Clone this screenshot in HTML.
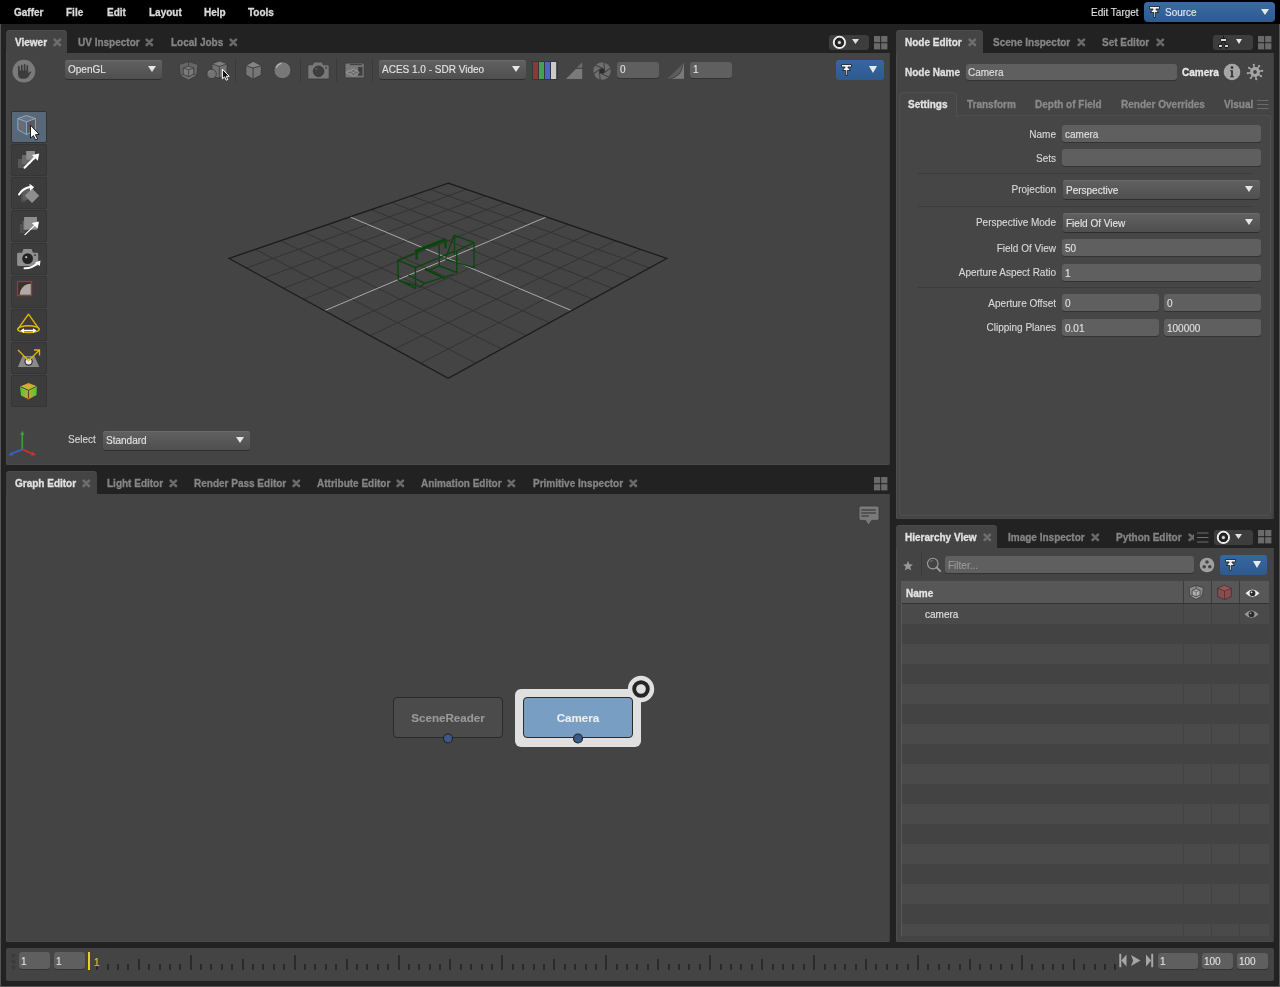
<!DOCTYPE html>
<html><head><meta charset="utf-8">
<style>
*{box-sizing:border-box;margin:0;padding:0}
html,body{width:1280px;height:987px;overflow:hidden;background:#222;font-family:"Liberation Sans",sans-serif;font-size:10px;color:#ddd}
.a{position:absolute}
svg.a{overflow:visible}
.t{position:absolute;white-space:nowrap;line-height:12px;font-size:10px;will-change:transform;-webkit-text-stroke:0.12px}
</style></head><body>

<div class="a" style="left:0px;top:24px;width:1px;height:963px;background:#555"></div>
<div class="a" style="left:1279px;top:24px;width:1px;height:963px;background:#555"></div>
<div class="a" style="left:0px;top:986px;width:1280px;height:1px;background:#555"></div>
<div class="a" style="left:0px;top:0px;width:1280px;height:24px;background:#000"></div>
<div class="t" style="left:14px;top:7px;color:#dadada;font-weight:bold;-webkit-text-stroke:0.3px;">Gaffer</div>
<div class="t" style="left:66px;top:7px;color:#dadada;font-weight:bold;-webkit-text-stroke:0.3px;">File</div>
<div class="t" style="left:107px;top:7px;color:#dadada;font-weight:bold;-webkit-text-stroke:0.3px;">Edit</div>
<div class="t" style="left:149px;top:7px;color:#dadada;font-weight:bold;-webkit-text-stroke:0.3px;">Layout</div>
<div class="t" style="left:204px;top:7px;color:#dadada;font-weight:bold;-webkit-text-stroke:0.3px;">Help</div>
<div class="t" style="left:248px;top:7px;color:#dadada;font-weight:bold;-webkit-text-stroke:0.3px;">Tools</div>
<div class="t" style="left:1091px;top:7px;color:#e0e0e0;">Edit Target</div>
<div class="a" style="left:1144px;top:2px;width:131px;height:20px;background:linear-gradient(#3a6ba6,#2d5a90);border-radius:4px;"></div>
<svg class="a" style="left:1149px;top:6px" width="12" height="12" viewBox="0 0 12 12"><path d="M0.5 0.5H10.5V3H6.8L9.5 6.5H6.3V11.5H4.7V6.5H1.5L4.2 3H0.5Z" fill="#f2f2f2" stroke="#161616" stroke-width="0.8" stroke-linejoin="round"/></svg>
<div class="t" style="left:1165px;top:7px;color:#e8e8e8;">Source</div>
<svg class="a" style="left:1261px;top:9px" width="8" height="6" viewBox="0 0 8 6"><path d="M0 0H8L4.0 6Z" fill="#e6e6e6"/></svg>
<div class="a" style="left:6px;top:53px;width:884px;height:412px;background:#444;border-radius:0 0 2px 2px;box-shadow:inset 1px 0 0 #4d4d4d, inset -1px 0 0 #3d3d3d, inset 0 -1px 0 #4a4a4a;"></div>
<div class="a" style="left:6px;top:30px;width:61px;height:24px;background:#444;border-radius:4px 4px 0 0;box-shadow:inset 0 1px 0 #4b4b4b"></div>
<div class="t" style="left:15px;top:37px;color:#e2e2e2;font-weight:bold;-webkit-text-stroke:0.3px;">Viewer</div>
<svg class="a" style="left:53px;top:38px" width="9" height="9" viewBox="0 0 9 9"><path d="M1.6 1.6L7 7M7 1.6L1.6 7" stroke="#6e6e6e" stroke-width="2.6" stroke-linecap="round"/></svg>
<div class="t" style="left:78px;top:37px;color:#858585;font-weight:bold;-webkit-text-stroke:0.3px;">UV Inspector</div>
<svg class="a" style="left:145px;top:38px" width="9" height="9" viewBox="0 0 9 9"><path d="M1.6 1.6L7 7M7 1.6L1.6 7" stroke="#6a6a6a" stroke-width="2.6" stroke-linecap="round"/></svg>
<div class="t" style="left:171px;top:37px;color:#858585;font-weight:bold;-webkit-text-stroke:0.3px;">Local Jobs</div>
<svg class="a" style="left:229px;top:38px" width="9" height="9" viewBox="0 0 9 9"><path d="M1.6 1.6L7 7M7 1.6L1.6 7" stroke="#6a6a6a" stroke-width="2.6" stroke-linecap="round"/></svg>
<div class="a" style="left:829px;top:35px;width:40px;height:15px;background:#3d3d3d;border-radius:3px"></div>
<svg class="a" style="left:832px;top:35px" width="14" height="14"><circle cx="7.4" cy="7.4" r="5.6" fill="none" stroke="#eee" stroke-width="2"/><circle cx="7.4" cy="7.4" r="3.5" fill="none" stroke="#1e1e1e" stroke-width="2.2"/><circle cx="7.4" cy="7.4" r="1.5" fill="#ddd"/></svg>
<svg class="a" style="left:852px;top:39px" width="7" height="5" viewBox="0 0 7 5"><path d="M0 0H7L3.5 5Z" fill="#e0e0e0"/></svg>
<svg class="a" style="left:874px;top:36px" width="14" height="14"><rect x="0" y="0" width="6.2" height="6.2" fill="#6a6a6a"/><rect x="7.2" y="0" width="6.2" height="6.2" fill="#6a6a6a"/><rect x="0" y="7.2" width="6.2" height="6.2" fill="#6a6a6a"/><rect x="7.2" y="7.2" width="6.2" height="6.2" fill="#6a6a6a"/></svg>
<div class="a" style="left:896px;top:53px;width:378px;height:466px;background:#444;border-radius:0 0 2px 2px;box-shadow:inset 1px 0 0 #4d4d4d, inset -1px 0 0 #3d3d3d, inset 0 -1px 0 #4a4a4a;"></div>
<div class="a" style="left:896px;top:30px;width:87px;height:24px;background:#444;border-radius:4px 4px 0 0;box-shadow:inset 0 1px 0 #4b4b4b"></div>
<div class="t" style="left:905px;top:37px;color:#e2e2e2;font-weight:bold;-webkit-text-stroke:0.3px;">Node Editor</div>
<svg class="a" style="left:968px;top:38px" width="9" height="9" viewBox="0 0 9 9"><path d="M1.6 1.6L7 7M7 1.6L1.6 7" stroke="#6e6e6e" stroke-width="2.6" stroke-linecap="round"/></svg>
<div class="t" style="left:993px;top:37px;color:#858585;font-weight:bold;-webkit-text-stroke:0.3px;">Scene Inspector</div>
<svg class="a" style="left:1077px;top:38px" width="9" height="9" viewBox="0 0 9 9"><path d="M1.6 1.6L7 7M7 1.6L1.6 7" stroke="#6a6a6a" stroke-width="2.6" stroke-linecap="round"/></svg>
<div class="t" style="left:1102px;top:37px;color:#858585;font-weight:bold;-webkit-text-stroke:0.3px;">Set Editor</div>
<svg class="a" style="left:1156px;top:38px" width="9" height="9" viewBox="0 0 9 9"><path d="M1.6 1.6L7 7M7 1.6L1.6 7" stroke="#6a6a6a" stroke-width="2.6" stroke-linecap="round"/></svg>
<div class="a" style="left:1213px;top:35px;width:40px;height:15px;background:#3d3d3d;border-radius:3px"></div>
<svg class="a" style="left:1217px;top:35px" width="14" height="14" viewBox="0 0 14 14"><path d="M6.5 0.5V3.6M6.5 6.4L3.5 9.4M6.5 6.4L9.5 9.4M3.5 12.5V13.8M9.5 12.5V13.8" stroke="#111" stroke-width="0.9"/><rect x="3.4" y="3.6" width="6.1" height="2.8" rx="0.6" fill="#f0f0f0" stroke="#111" stroke-width="1"/><rect x="1.5" y="9.4" width="3.9" height="3.1" rx="0.6" fill="#d8d8d8" stroke="#111" stroke-width="1"/><rect x="7.6" y="9.4" width="3.9" height="3.1" rx="0.6" fill="#d8d8d8" stroke="#111" stroke-width="1"/></svg>
<svg class="a" style="left:1236px;top:39px" width="6" height="5" viewBox="0 0 6 5"><path d="M0 0H6L3.0 5Z" fill="#e8e8e8"/></svg>
<svg class="a" style="left:1258px;top:36px" width="14" height="14"><rect x="0" y="0" width="6.2" height="6.2" fill="#6a6a6a"/><rect x="7.2" y="0" width="6.2" height="6.2" fill="#6a6a6a"/><rect x="0" y="7.2" width="6.2" height="6.2" fill="#6a6a6a"/><rect x="7.2" y="7.2" width="6.2" height="6.2" fill="#6a6a6a"/></svg>
<div class="a" style="left:6px;top:494px;width:884px;height:448px;background:#444;border-radius:0 0 2px 2px;box-shadow:inset 1px 0 0 #4d4d4d, inset -1px 0 0 #3d3d3d, inset 0 -1px 0 #4a4a4a;"></div>
<div class="a" style="left:6px;top:471px;width:91px;height:24px;background:#444;border-radius:4px 4px 0 0;box-shadow:inset 0 1px 0 #4b4b4b"></div>
<div class="t" style="left:15px;top:478px;color:#e2e2e2;font-weight:bold;-webkit-text-stroke:0.3px;">Graph Editor</div>
<svg class="a" style="left:82px;top:479px" width="9" height="9" viewBox="0 0 9 9"><path d="M1.6 1.6L7 7M7 1.6L1.6 7" stroke="#6e6e6e" stroke-width="2.6" stroke-linecap="round"/></svg>
<div class="t" style="left:107px;top:478px;color:#858585;font-weight:bold;-webkit-text-stroke:0.3px;">Light Editor</div>
<svg class="a" style="left:169px;top:479px" width="9" height="9" viewBox="0 0 9 9"><path d="M1.6 1.6L7 7M7 1.6L1.6 7" stroke="#6a6a6a" stroke-width="2.6" stroke-linecap="round"/></svg>
<div class="t" style="left:194px;top:478px;color:#858585;font-weight:bold;-webkit-text-stroke:0.3px;">Render Pass Editor</div>
<svg class="a" style="left:292px;top:479px" width="9" height="9" viewBox="0 0 9 9"><path d="M1.6 1.6L7 7M7 1.6L1.6 7" stroke="#6a6a6a" stroke-width="2.6" stroke-linecap="round"/></svg>
<div class="t" style="left:317px;top:478px;color:#858585;font-weight:bold;-webkit-text-stroke:0.3px;">Attribute Editor</div>
<svg class="a" style="left:396px;top:479px" width="9" height="9" viewBox="0 0 9 9"><path d="M1.6 1.6L7 7M7 1.6L1.6 7" stroke="#6a6a6a" stroke-width="2.6" stroke-linecap="round"/></svg>
<div class="t" style="left:421px;top:478px;color:#858585;font-weight:bold;-webkit-text-stroke:0.3px;">Animation Editor</div>
<svg class="a" style="left:507px;top:479px" width="9" height="9" viewBox="0 0 9 9"><path d="M1.6 1.6L7 7M7 1.6L1.6 7" stroke="#6a6a6a" stroke-width="2.6" stroke-linecap="round"/></svg>
<div class="t" style="left:533px;top:478px;color:#858585;font-weight:bold;-webkit-text-stroke:0.3px;">Primitive Inspector</div>
<svg class="a" style="left:629px;top:479px" width="9" height="9" viewBox="0 0 9 9"><path d="M1.6 1.6L7 7M7 1.6L1.6 7" stroke="#6a6a6a" stroke-width="2.6" stroke-linecap="round"/></svg>
<svg class="a" style="left:874px;top:477px" width="14" height="14"><rect x="0" y="0" width="6.2" height="6.2" fill="#6a6a6a"/><rect x="7.2" y="0" width="6.2" height="6.2" fill="#6a6a6a"/><rect x="0" y="7.2" width="6.2" height="6.2" fill="#6a6a6a"/><rect x="7.2" y="7.2" width="6.2" height="6.2" fill="#6a6a6a"/></svg>
<div class="a" style="left:896px;top:548px;width:378px;height:394px;background:#444;border-radius:0 0 2px 2px;box-shadow:inset 1px 0 0 #4d4d4d, inset -1px 0 0 #3d3d3d, inset 0 -1px 0 #4a4a4a;"></div>
<div class="a" style="left:896px;top:525px;width:101px;height:24px;background:#444;border-radius:4px 4px 0 0;box-shadow:inset 0 1px 0 #4b4b4b"></div>
<div class="t" style="left:905px;top:532px;color:#e2e2e2;font-weight:bold;-webkit-text-stroke:0.3px;">Hierarchy View</div>
<svg class="a" style="left:983px;top:533px" width="9" height="9" viewBox="0 0 9 9"><path d="M1.6 1.6L7 7M7 1.6L1.6 7" stroke="#6e6e6e" stroke-width="2.6" stroke-linecap="round"/></svg>
<div class="t" style="left:1008px;top:532px;color:#858585;font-weight:bold;-webkit-text-stroke:0.3px;">Image Inspector</div>
<svg class="a" style="left:1091px;top:533px" width="9" height="9" viewBox="0 0 9 9"><path d="M1.6 1.6L7 7M7 1.6L1.6 7" stroke="#6a6a6a" stroke-width="2.6" stroke-linecap="round"/></svg>
<div class="t" style="left:1116px;top:532px;color:#858585;font-weight:bold;-webkit-text-stroke:0.3px;">Python Editor</div>
<svg class="a" style="left:1188px;top:533px" width="9" height="9" viewBox="0 0 9 9"><path d="M1.6 1.6L7 7M7 1.6L1.6 7" stroke="#6a6a6a" stroke-width="2.6" stroke-linecap="round"/></svg>
<div class="a" style="left:1194px;top:525px;width:3px;height:23px;background:#222"></div>
<svg class="a" style="left:1197px;top:532px" width="12" height="11"><path d="M0 1H11.5M0 5.5H11.5M0 10H11.5" stroke="#6e6e6e" stroke-width="1.2"/></svg>
<div class="a" style="left:1214px;top:530px;width:39px;height:15px;background:#3d3d3d;border-radius:3px"></div>
<svg class="a" style="left:1216px;top:530px" width="14" height="14"><circle cx="7.4" cy="7.4" r="5.6" fill="none" stroke="#eee" stroke-width="2"/><circle cx="7.4" cy="7.4" r="3.5" fill="none" stroke="#1e1e1e" stroke-width="2.2"/><circle cx="7.4" cy="7.4" r="1.5" fill="#ddd"/></svg>
<svg class="a" style="left:1235px;top:534px" width="7" height="5" viewBox="0 0 7 5"><path d="M0 0H7L3.5 5Z" fill="#e0e0e0"/></svg>
<svg class="a" style="left:1258px;top:530px" width="14" height="14"><rect x="0" y="0" width="6.2" height="6.2" fill="#6a6a6a"/><rect x="7.2" y="0" width="6.2" height="6.2" fill="#6a6a6a"/><rect x="0" y="7.2" width="6.2" height="6.2" fill="#6a6a6a"/><rect x="7.2" y="7.2" width="6.2" height="6.2" fill="#6a6a6a"/></svg>
<div class="a" style="left:6px;top:948px;width:1268px;height:33px;background:#444;border-radius:2px;"></div>
<svg class="a" style="left:12px;top:60px" width="24" height="24" viewBox="0 0 24 24"><circle cx="11.9" cy="11.2" r="11.35" fill="#7a7a7a"/><path d="M6.9 6.6V12M9.8 5.6V11M12.6 4.8V11M15.3 5.8V12" stroke="#3c3c3c" stroke-width="1.7" stroke-linecap="round"/><path d="M6.1 10.5H16.2V13.5L18.3 11.2L19.3 12L16.5 16.5Q15.2 18.8 12.4 18.8H10.4Q6.1 18.8 6.1 14.5Z" fill="#3c3c3c"/></svg>
<div class="a" style="left:65px;top:60px;width:97px;height:19px;background:linear-gradient(#616161,#4f4f4f);border-radius:3px;box-shadow:0 1px 0 #2e2e2e, inset 0 1px 0 #6a6a6a;"></div>
<div class="t" style="left:68px;top:64px;color:#e4e4e4;">OpenGL</div>
<svg class="a" style="left:148px;top:66px" width="8" height="6" viewBox="0 0 8 6"><path d="M0 0H8L4.0 6Z" fill="#e6e6e6"/></svg>
<svg class="a" style="left:179px;top:61px" width="20" height="20" viewBox="0 0 20 20"><path d="M0.2 3.6L9.6 0.5L19 3.6L18 14.3L9.6 19L1.2 14.8Z" fill="#666" stroke="#393939" stroke-width="0.8"/><path d="M1.2 14.8L9.6 11.5L18 14.3L9.6 19Z" fill="#707070" stroke="#393939" stroke-width="0.7"/><path d="M9.6 0.5V5" stroke="#393939" stroke-width="0.8"/><path d="M9.6 5L14.75 7.1V13.2L9.6 15.75L4.2 13.4V7.1Z" fill="#7a7a7a" stroke="#393939" stroke-width="0.8"/><path d="M4.2 7.1L9.6 8.7L14.75 7.1M9.6 8.7V15.75" stroke="#393939" stroke-width="0.7" fill="none"/></svg>
<svg class="a" style="left:206px;top:61px" width="22" height="19" viewBox="0 0 22 19"><path d="M13.5 0.3L21 3.1V14.8L13.3 16.9L6 15.75V2.9Z" fill="#727272" stroke="#393939" stroke-width="0.8"/><path d="M6.2 3.2L13.3 5.4L20.8 3.2L13.5 0.6Z" fill="#7e7e7e"/><path d="M5.8 2.9L13.3 5.4L21 3.1M13.3 5.4V16.8" stroke="#393939" stroke-width="0.8" fill="none"/><circle cx="5.6" cy="12.9" r="4.7" fill="#737373" stroke="#393939" stroke-width="0.8"/><path d="M2.8 11.5a3 3 0 0 1 1.8 -2" stroke="#999" stroke-width="0.8" fill="none"/></svg>
<svg class="a" style="left:221px;top:68px" width="10" height="14"><path d="M1.4 1.2V10.8L3.6 8.9L5.2 12.2L6.8 11.5L5.3 8.3H8.2Z" fill="#111" stroke="#fff" stroke-width="1" stroke-linejoin="round"/></svg>
<div class="a" style="left:235px;top:58px;width:1px;height:24px;background:#3a3a3a"></div>
<svg class="a" style="left:245px;top:61px" width="18" height="20" viewBox="0 0 18 20"><path d="M8.1 0.5L16.3 4.8V14.1L8.1 18.2L0.8 14.1V4.8Z" fill="#767676" stroke="#393939" stroke-width="0.9"/><path d="M8.1 0.9L16 4.9L8.1 7L1.1 4.9Z" fill="#838383"/><path d="M0.8 4.8L8.1 7L16.3 4.8M8.1 7V18.2" stroke="#393939" stroke-width="0.9" fill="none"/></svg>
<svg class="a" style="left:273px;top:61px" width="19" height="19" viewBox="0 0 19 19"><circle cx="9.45" cy="9.2" r="8.5" fill="#787878" stroke="#393939" stroke-width="0.8"/><path d="M3.6 6.2Q4.8 3.2 8 2.4" stroke="#b8b8b8" stroke-width="1.3" fill="none" stroke-linecap="round"/></svg>
<div class="a" style="left:300px;top:58px;width:1px;height:24px;background:#3a3a3a"></div>
<svg class="a" style="left:307px;top:61px" width="23" height="19" viewBox="0 0 23 19"><path d="M2.3 3.8H5.5L6.8 1H15L16.3 3.8H20.7a1.5 1.5 0 0 1 1.5 1.5V16.5A1.5 1.5 0 0 1 20.7 18H2.3A1.5 1.5 0 0 1 0.8 16.5V5.3A1.5 1.5 0 0 1 2.3 3.8Z" fill="#787878" stroke="#393939" stroke-width="0.8"/><circle cx="11.55" cy="10.3" r="5.3" fill="#3e3e3e" stroke="#303030" stroke-width="0.8"/><circle cx="9.2" cy="8" r="0.8" fill="#777"/><circle cx="19.1" cy="6.7" r="1" fill="#444"/></svg>
<div class="a" style="left:336px;top:58px;width:1px;height:24px;background:#3a3a3a"></div>
<svg class="a" style="left:344px;top:62px" width="21" height="17" viewBox="0 0 21 17"><rect x="1" y="1.1" width="19.2" height="14.8" rx="1.5" fill="#787878" stroke="#393939" stroke-width="0.8"/><path d="M6 2.6H18" stroke="#3e3e3e" stroke-width="1"/><rect x="14.2" y="4.9" width="4.3" height="8.8" fill="#3e3e3e"/><path d="M2.1 10.4L9.8 7.1L15.2 10.4L9.8 14.2Z" fill="#6a6a6a" stroke="#a0a0a0" stroke-width="0.9"/><path d="M6 8.8L12.5 12.3M12.5 8.8L6 12.3" stroke="#a0a0a0" stroke-width="0.6"/></svg>
<div class="a" style="left:372px;top:58px;width:1px;height:24px;background:#3a3a3a"></div>
<div class="a" style="left:379px;top:60px;width:147px;height:19px;background:linear-gradient(#616161,#4f4f4f);border-radius:3px;box-shadow:0 1px 0 #2e2e2e, inset 0 1px 0 #6a6a6a;"></div>
<div class="t" style="left:382px;top:64px;color:#e4e4e4;">ACES 1.0 - SDR Video</div>
<svg class="a" style="left:512px;top:66px" width="8" height="6" viewBox="0 0 8 6"><path d="M0 0H8L4.0 6Z" fill="#e6e6e6"/></svg>
<svg class="a" style="left:532px;top:61px" width="26" height="19" viewBox="0 0 26 19"><rect x="0" y="0" width="26" height="19" fill="#363636" rx="1"/><rect x="1" y="1" width="5" height="17" fill="#8a3a36"/><rect x="7" y="1" width="5" height="17" fill="#45a050"/><rect x="13" y="1" width="5" height="17" fill="#5062c8"/><rect x="19" y="1" width="5.2" height="17" fill="#cacaca"/></svg>
<svg class="a" style="left:565px;top:61px" width="18" height="19" viewBox="0 0 18 19"><path d="M17.2 1.3V6.8H11.9Z" fill="#6c6c6c"/><path d="M10.8 7.9H17.2V18H0.9Z" fill="#7a7a7a"/></svg>
<svg class="a" style="left:593px;top:62px" width="18" height="18" viewBox="0 0 18 18"><circle cx="9" cy="9" r="8.7" fill="#6e6e6e"/><circle cx="9" cy="9" r="2.8" fill="#2c2c2c"/><path d="M9 9 L17.70 9.00" stroke="#3a3a3a" stroke-width="0.9" transform="rotate(25 9 9) translate(0.00 2.60)"/><path d="M9 9 L13.35 16.53" stroke="#3a3a3a" stroke-width="0.9" transform="rotate(25 9 9) translate(-2.25 1.30)"/><path d="M9 9 L4.65 16.54" stroke="#3a3a3a" stroke-width="0.9" transform="rotate(25 9 9) translate(-2.25 -1.30)"/><path d="M9 9 L0.30 9.01" stroke="#3a3a3a" stroke-width="0.9" transform="rotate(25 9 9) translate(-0.00 -2.60)"/><path d="M9 9 L4.64 1.47" stroke="#3a3a3a" stroke-width="0.9" transform="rotate(25 9 9) translate(2.25 -1.30)"/><path d="M9 9 L13.34 1.46" stroke="#3a3a3a" stroke-width="0.9" transform="rotate(25 9 9) translate(2.25 1.30)"/></svg>
<div class="a" style="left:617px;top:62px;width:42px;height:16px;background:#5f5f5f;border-radius:3px;box-shadow:0 1px 0 #333;"></div>
<div class="t" style="left:620px;top:64px;color:#e0e0e0;">0</div>
<svg class="a" style="left:667px;top:62px" width="18" height="17" viewBox="0 0 18 17"><path d="M17 0.5V16.8H0.5Z" fill="#5c5c5c"/><path d="M15.6 3.2Q15.2 14 3 16.8H17V3.2Z" fill="#7a7a7a"/><path d="M15.6 3.2Q15.2 14 3 16.8" stroke="#3e3e3e" stroke-width="0.9" fill="none"/></svg>
<div class="a" style="left:690px;top:62px;width:42px;height:16px;background:#5f5f5f;border-radius:3px;box-shadow:0 1px 0 #333;"></div>
<div class="t" style="left:693px;top:64px;color:#e0e0e0;">1</div>
<div class="a" style="left:836px;top:60px;width:48px;height:20px;background:linear-gradient(#3567a1,#2e5a8e);border-radius:3px;"></div>
<svg class="a" style="left:841px;top:64px" width="12" height="12" viewBox="0 0 12 12"><path d="M0.5 0.5H10.5V3H6.8L9.5 6.5H6.3V11.5H4.7V6.5H1.5L4.2 3H0.5Z" fill="#f2f2f2" stroke="#161616" stroke-width="0.8" stroke-linejoin="round"/></svg>
<svg class="a" style="left:869px;top:66px" width="8" height="7" viewBox="0 0 8 7"><path d="M0 0H8L4.0 7Z" fill="#eaeaea"/></svg>
<div class="a" style="left:11px;top:111px;width:36px;height:32px;background:#586879;border:1px solid #333;border-radius:2px"></div>
<div class="a" style="left:11px;top:144px;width:36px;height:32px;background:#3c3c3c;border:1px solid #353535;border-radius:2px"></div>
<div class="a" style="left:11px;top:177px;width:36px;height:32px;background:#3c3c3c;border:1px solid #353535;border-radius:2px"></div>
<div class="a" style="left:11px;top:210px;width:36px;height:32px;background:#3c3c3c;border:1px solid #353535;border-radius:2px"></div>
<div class="a" style="left:11px;top:243px;width:36px;height:32px;background:#3c3c3c;border:1px solid #353535;border-radius:2px"></div>
<div class="a" style="left:11px;top:276px;width:36px;height:32px;background:#3c3c3c;border:1px solid #353535;border-radius:2px"></div>
<div class="a" style="left:11px;top:309px;width:36px;height:32px;background:#3c3c3c;border:1px solid #353535;border-radius:2px"></div>
<div class="a" style="left:11px;top:342px;width:36px;height:32px;background:#3c3c3c;border:1px solid #353535;border-radius:2px"></div>
<div class="a" style="left:11px;top:375px;width:36px;height:32px;background:#3c3c3c;border:1px solid #353535;border-radius:2px"></div>
<svg class="a" style="left:0;top:0" width="60" height="420" viewBox="0 0 60 420">
<path d="M26.5 115.5L35.4 118.5V129.4L26.5 134.6L17.8 129.6V118.5Z" fill="#6c6c6c"/><path d="M26.5 121.8L35.4 118.5V129.4L26.5 134.6Z" fill="#5a5a5a"/><path d="M26.5 115.5L35.4 118.5L26.5 121.8L17.8 118.5Z" fill="#737373"/><path d="M26.5 115.5L35.4 118.5V129.4L26.5 134.6L17.8 129.6V118.5ZM17.8 118.5L26.5 121.8L35.4 118.5M26.5 121.8V134.6" fill="none" stroke="#7fb2e0" stroke-width="0.9"/><path d="M30.5 125.2V138.2L33.4 135.6L35.6 140L37.6 139L35.4 134.7L39.2 134.4Z" fill="#fff" stroke="#111" stroke-width="0.9" stroke-linejoin="round"/>
<rect x="18" y="159" width="9" height="9" fill="#585858"/><rect x="22" y="155" width="9" height="9" fill="#6a6a6a"/><rect x="26.2" y="151" width="8.7" height="8.6" fill="#8e8e8e"/><path d="M24.5 167.8L35 157.3" stroke="#fff" stroke-width="2" stroke-linecap="round"/><path d="M39.2 153.6L37.8 160.8L32 155Z" fill="#fff"/>
<path d="M21 189L27 186L30 196L25 202H21Z" fill="#4f4f4f"/><path d="M23 190L29 187L31 195L27 200H23Z" fill="#5e5e5e"/><path d="M32 188.5L39.2 195.7L32 202.9L24.8 195.7Z" fill="#8e8e8e"/><path d="M19 194.5Q22.5 188.5 30 187" stroke="#fff" stroke-width="2" fill="none" stroke-linecap="round"/><path d="M29.5 183.8L34.2 187.2L30 190.8Z" fill="#fff"/>
<path d="M21 224V232H25" stroke="#555" stroke-width="1.6" fill="none"/><path d="M23.5 221V229.5H27" stroke="#666" stroke-width="1.6" fill="none"/><rect x="24.1" y="217" width="12.9" height="12.7" fill="#8e8e8e"/><path d="M25 234.6L35.5 224.6" stroke="#fff" stroke-width="1.3" stroke-linecap="round"/><path d="M39 221.6L37.6 228.8L31.8 223Z" fill="#fff"/>
<path d="M18.5 252.8H22L23.5 249H31.5L33 252.8H36.8a1.4 1.4 0 0 1 1.4 1.4V264.5a1.4 1.4 0 0 1 -1.4 1.4H18.5a1.4 1.4 0 0 1 -1.4 -1.4V254.2a1.4 1.4 0 0 1 1.4 -1.4Z" fill="#8f8f8f"/><circle cx="27.6" cy="258.6" r="5.4" fill="#232323"/><rect x="25.3" y="256.3" width="1.8" height="1.8" fill="#cfcfcf"/><rect x="34.2" y="254.4" width="1.6" height="1.6" fill="#333"/><path d="M24.5 268.3Q32 268.5 37 263.5" stroke="#fff" stroke-width="2" fill="none" stroke-linecap="round"/><path d="M40.5 260.5L39.8 266L35 262.5Z" fill="#fff"/>
<rect x="17.5" y="281.5" width="14" height="14" fill="#2f3537" stroke="#cc2222" stroke-width="1.3"/><path d="M30.8 283.8V294.8H19.8A11 11 0 0 1 30.8 283.8Z" fill="#ababab"/>
<path d="M18 329L28.5 314.2L39 329" stroke="#e6b800" stroke-width="1.3" fill="none" stroke-linejoin="round"/><ellipse cx="28.5" cy="329.2" rx="10.8" ry="3.4" stroke="#e6b800" stroke-width="1.4" fill="none"/><path d="M23 330.6H34" stroke="#fff" stroke-width="1.6"/><path d="M20.5 330.6L24 328.3V333Z M36.5 330.6L33 328.3V333Z" fill="#fff"/>
<path d="M22.5 356H34.5L39.3 367H17.9Z" fill="#8a8a8a"/><circle cx="28.6" cy="361.6" r="4.2" fill="#333"/><circle cx="28.6" cy="361.6" r="3" fill="#e8e8e8"/><path d="M18 350L28.6 360.6L39.5 350M34 350H39.5V355.5" stroke="#e6b800" stroke-width="1.3" fill="none"/>
<defs><linearGradient id="cg" x1="0" y1="0" x2="0" y2="1"><stop offset="0" stop-color="#c8c02a"/><stop offset="0.5" stop-color="#b4b02a"/><stop offset="1" stop-color="#e0501c"/></linearGradient><linearGradient id="cl" x1="0" y1="0" x2="1" y2="0.3"><stop offset="0" stop-color="#37d03a"/><stop offset="1" stop-color="#c0a830"/></linearGradient><linearGradient id="cr" x1="1" y1="0" x2="0" y2="0.3"><stop offset="0" stop-color="#37d03a"/><stop offset="1" stop-color="#c0a830"/></linearGradient></defs><linearGradient id="ct" x1="0" y1="0" x2="0" y2="1"><stop offset="0" stop-color="#e89a30"/><stop offset="1" stop-color="#a8c838"/></linearGradient><path d="M28.5 383L36.9 386.2L28.5 390.3L20 386.5Z" fill="url(#ct)"/><path d="M20 386.5L28.5 390.3V399.2L21 395.4Z" fill="url(#cl)"/><path d="M36.9 386.2L28.5 390.3V399.2L36.5 395.1Z" fill="url(#cr)"/><path d="M28.5 392V399.5" stroke="#e04a1a" stroke-width="1.2"/><path d="M20.5 386.7L28.5 390.3L36.4 386.4M28.5 390.3V398" stroke="#3a3a3a" stroke-width="0.8" fill="none"/>
</svg>
<svg class="a" style="left:0;top:420px" width="50" height="45"><path d="M22.3 29.3V13" stroke="#3aa03a" stroke-width="1.6"/><path d="M22.3 10.5L24.3 15H20.3Z" fill="#3aa03a"/><path d="M22.3 29.3L11 34" stroke="#3a5fd0" stroke-width="1.8"/><path d="M8 35.2L12.5 31.5L13 35.5Z" fill="#3a5fd0"/><path d="M22.3 29.3L32 33.5" stroke="#d03030" stroke-width="1.8"/><path d="M36 35L30.8 35.8L32.5 31.5Z" fill="#d03030"/></svg>
<div class="t" style="left:68px;top:434px;color:#d8d8d8;">Select</div>
<div class="a" style="left:103px;top:431px;width:147px;height:19px;background:linear-gradient(#616161,#4f4f4f);border-radius:3px;box-shadow:0 1px 0 #2e2e2e, inset 0 1px 0 #6a6a6a;"></div>
<div class="t" style="left:106px;top:435px;color:#e4e4e4;">Standard</div>
<svg class="a" style="left:236px;top:437px" width="8" height="6" viewBox="0 0 8 6"><path d="M0 0H8L4.0 6Z" fill="#e6e6e6"/></svg>
<svg class="a" style="left:0;top:0" width="890" height="465" viewBox="0 0 890 465">
<path d="M466.46 189.36L246.44 267.93M430.13 189.34L649.55 267.90M485.31 195.86L264.60 277.86M411.26 195.83L631.47 277.81M504.90 202.62L283.64 288.27M391.64 202.58L612.50 288.21M525.26 209.64L303.63 299.20M371.23 209.59L592.58 299.13M568.53 224.56L346.76 322.79M327.84 224.51L549.56 322.70M591.54 232.50L370.07 335.53M304.74 232.45L526.29 335.45M615.54 240.77L394.67 348.98M280.64 240.73L501.72 348.92M640.60 249.42L420.67 363.20M255.45 249.39L475.73 363.16" stroke="#333" stroke-width="1" fill="none"/>
<path d="M546.46 216.95L324.65 310.69M349.98 216.90L571.62 310.61" stroke="#a9a9a9" stroke-width="1" fill="none"/>
<path d="M448.30 183.10L666.80 258.45L448.20 378.25L229.10 258.45Z" stroke="#1c1c1c" stroke-width="1.3" fill="none"/>
<path d="M397.8 260.2L415.4 267.7L415.7 288.7L398.1 279.6ZM398.4 280.3L420.4 287.2L424.1 283.4L454 274M408.4 275.2L424.1 282.8M439.2 245.1V265.8L454 271.5M439.2 265.8L430.4 269.6M415.4 267.7L454 251.4M397.8 260.2L414.7 253.2M454.1 235.2L474 242.6V267.6L445.5 259.4M454.1 235.2L445.5 258.6M454.5 235.9V254.7M456.8 250.8V272.7L439.2 265.6M474 242.6L456.8 250.8M456.8 262.5L474 267.6" stroke="#08460b" stroke-width="1.3" fill="none" stroke-linejoin="round"/>
<path d="M424.8 269L444.9 278.4" stroke="#08460b" stroke-width="2" fill="none"/>
<path d="M415 251.5L445.8 239.3" stroke="#08460b" stroke-width="3" fill="none"/><path d="M416.6 251V259.5M445.5 239.5V248.2" stroke="#08460b" stroke-width="2.2" fill="none"/>
</svg>
<div class="t" style="left:905px;top:67px;color:#e0e0e0;font-weight:bold;-webkit-text-stroke:0.3px;">Node Name</div>
<div class="a" style="left:966px;top:64px;width:211px;height:16px;background:#5f5f5f;border-radius:3px;box-shadow:0 1px 0 #333;"></div>
<div class="t" style="left:968px;top:67px;color:#e0e0e0;">Camera</div>
<div class="t" style="left:1182px;top:67px;color:#e8e8e8;font-weight:bold;-webkit-text-stroke:0.3px;">Camera</div>
<svg class="a" style="left:1223px;top:63px" width="18" height="18" viewBox="0 0 18 18"><circle cx="9" cy="9" r="8.3" fill="#a6a6a6"/><circle cx="9" cy="4.6" r="1.4" fill="#333"/><path d="M7 7.3H9.9V13.2H11V14.2H7V13.2H8.1V8.3H7Z" fill="#333"/></svg>
<svg class="a" style="left:1246px;top:63px" width="18" height="18" viewBox="0 0 18 18"><path d="M8.31 5.06L7.72 1.71" stroke="#a6a6a6" stroke-width="1.5" stroke-linecap="round"/><circle cx="7.72" cy="1.71" r="1.05" fill="#a6a6a6"/><path d="M11.29 5.72L13.24 2.94" stroke="#a6a6a6" stroke-width="1.5" stroke-linecap="round"/><circle cx="13.24" cy="2.94" r="1.05" fill="#a6a6a6"/><path d="M12.94 8.31L16.29 7.72" stroke="#a6a6a6" stroke-width="1.5" stroke-linecap="round"/><circle cx="16.29" cy="7.72" r="1.05" fill="#a6a6a6"/><path d="M12.28 11.29L15.06 13.24" stroke="#a6a6a6" stroke-width="1.5" stroke-linecap="round"/><circle cx="15.06" cy="13.24" r="1.05" fill="#a6a6a6"/><path d="M9.69 12.94L10.28 16.29" stroke="#a6a6a6" stroke-width="1.5" stroke-linecap="round"/><circle cx="10.28" cy="16.29" r="1.05" fill="#a6a6a6"/><path d="M6.71 12.28L4.76 15.06" stroke="#a6a6a6" stroke-width="1.5" stroke-linecap="round"/><circle cx="4.76" cy="15.06" r="1.05" fill="#a6a6a6"/><path d="M5.06 9.69L1.71 10.28" stroke="#a6a6a6" stroke-width="1.5" stroke-linecap="round"/><circle cx="1.71" cy="10.28" r="1.05" fill="#a6a6a6"/><path d="M5.72 6.71L2.94 4.76" stroke="#a6a6a6" stroke-width="1.5" stroke-linecap="round"/><circle cx="2.94" cy="4.76" r="1.05" fill="#a6a6a6"/><circle cx="9" cy="9" r="4.9" fill="#a6a6a6"/><circle cx="9" cy="9" r="1.9" fill="#444"/></svg>
<div class="a" style="left:899px;top:115px;width:372px;height:401px;background:#464646;border:1px solid #4f4f4f;border-radius:0 3px 3px 3px;"></div>
<div class="a" style="left:899px;top:92px;width:58px;height:25px;background:#464646;border:1px solid #4f4f4f;border-bottom:none;border-radius:4px 4px 0 0;"></div>
<div class="t" style="left:908px;top:99px;color:#e2e2e2;font-weight:bold;-webkit-text-stroke:0.3px;">Settings</div>
<div class="t" style="left:967px;top:99px;color:#8a8a8a;font-weight:bold;-webkit-text-stroke:0.3px;">Transform</div>
<div class="t" style="left:1035px;top:99px;color:#8a8a8a;font-weight:bold;-webkit-text-stroke:0.3px;">Depth of Field</div>
<div class="t" style="left:1121px;top:99px;color:#8a8a8a;font-weight:bold;-webkit-text-stroke:0.3px;">Render Overrides</div>
<div class="t" style="left:1224px;top:99px;color:#8a8a8a;font-weight:bold;-webkit-text-stroke:0.3px;">Visual</div>
<svg class="a" style="left:1257px;top:99px" width="12" height="11"><path d="M0 1.5H11.5M0 5.5H11.5M0 9.5H11.5" stroke="#6a6a6a" stroke-width="1"/></svg>
<div class="t" style="left:756px;top:129px;width:300px;text-align:right;color:#d8d8d8">Name</div>
<div class="a" style="left:1062px;top:125px;width:199px;height:17px;background:#5f5f5f;border-radius:3px;box-shadow:0 1px 0 #333;"></div>
<div class="t" style="left:1065px;top:129px;color:#e0e0e0;">camera</div>
<div class="t" style="left:756px;top:153px;width:300px;text-align:right;color:#d8d8d8">Sets</div>
<div class="a" style="left:1062px;top:149px;width:199px;height:17px;background:#5f5f5f;border-radius:3px;box-shadow:0 1px 0 #333;"></div>
<div class="a" style="left:918px;top:173px;width:335px;height:1px;background:#3c3c3c"></div>
<div class="t" style="left:756px;top:184px;width:300px;text-align:right;color:#d8d8d8">Projection</div>
<div class="a" style="left:1063px;top:180px;width:197px;height:19px;background:linear-gradient(#616161,#4f4f4f);border-radius:3px;box-shadow:0 1px 0 #2e2e2e, inset 0 1px 0 #6a6a6a;"></div>
<div class="t" style="left:1066px;top:185px;color:#e4e4e4;">Perspective</div>
<svg class="a" style="left:1245px;top:186px" width="8" height="6" viewBox="0 0 8 6"><path d="M0 0H8L4.0 6Z" fill="#e6e6e6"/></svg>
<div class="a" style="left:918px;top:206px;width:335px;height:1px;background:#3c3c3c"></div>
<div class="t" style="left:756px;top:217px;width:300px;text-align:right;color:#d8d8d8">Perspective Mode</div>
<div class="a" style="left:1063px;top:213px;width:197px;height:19px;background:linear-gradient(#616161,#4f4f4f);border-radius:3px;box-shadow:0 1px 0 #2e2e2e, inset 0 1px 0 #6a6a6a;"></div>
<div class="t" style="left:1066px;top:218px;color:#e4e4e4;">Field Of View</div>
<svg class="a" style="left:1245px;top:219px" width="8" height="6" viewBox="0 0 8 6"><path d="M0 0H8L4.0 6Z" fill="#e6e6e6"/></svg>
<div class="t" style="left:756px;top:243px;width:300px;text-align:right;color:#d8d8d8">Field Of View</div>
<div class="a" style="left:1062px;top:239px;width:199px;height:17px;background:#5f5f5f;border-radius:3px;box-shadow:0 1px 0 #333;"></div>
<div class="t" style="left:1065px;top:243px;color:#e0e0e0;">50</div>
<div class="t" style="left:756px;top:267px;width:300px;text-align:right;color:#d8d8d8">Aperture Aspect Ratio</div>
<div class="a" style="left:1062px;top:264px;width:199px;height:17px;background:#5f5f5f;border-radius:3px;box-shadow:0 1px 0 #333;"></div>
<div class="t" style="left:1065px;top:268px;color:#e0e0e0;">1</div>
<div class="a" style="left:918px;top:287px;width:335px;height:1px;background:#3c3c3c"></div>
<div class="t" style="left:756px;top:298px;width:300px;text-align:right;color:#d8d8d8">Aperture Offset</div>
<div class="a" style="left:1062px;top:294px;width:97px;height:17px;background:#5f5f5f;border-radius:3px;box-shadow:0 1px 0 #333;"></div>
<div class="t" style="left:1065px;top:298px;color:#e0e0e0;">0</div>
<div class="a" style="left:1164px;top:294px;width:97px;height:17px;background:#5f5f5f;border-radius:3px;box-shadow:0 1px 0 #333;"></div>
<div class="t" style="left:1167px;top:298px;color:#e0e0e0;">0</div>
<div class="t" style="left:756px;top:322px;width:300px;text-align:right;color:#d8d8d8">Clipping Planes</div>
<div class="a" style="left:1062px;top:319px;width:97px;height:17px;background:#5f5f5f;border-radius:3px;box-shadow:0 1px 0 #333;"></div>
<div class="t" style="left:1065px;top:323px;color:#e0e0e0;">0.01</div>
<div class="a" style="left:1164px;top:319px;width:97px;height:17px;background:#5f5f5f;border-radius:3px;box-shadow:0 1px 0 #333;"></div>
<div class="t" style="left:1167px;top:323px;color:#e0e0e0;">100000</div>
<svg class="a" style="left:858px;top:505px" width="22" height="22" viewBox="0 0 22 22"><path d="M2.8 1H19.2a1.8 1.8 0 0 1 1.8 1.8V13.6a1.8 1.8 0 0 1 -1.8 1.8H13.7L10.5 20.3L7.5 15.4H2.8A1.8 1.8 0 0 1 1 13.6V2.8A1.8 1.8 0 0 1 2.8 1Z" fill="#7a7a7a" stroke="#3a3a3a" stroke-width="0.8"/><path d="M3.2 5H17.9M3.2 8H17.9M3.2 11H10.8" stroke="#474747" stroke-width="1.7"/></svg>
<div class="a" style="left:393px;top:697px;width:110px;height:41px;background:#4b4b4b;border:1.7px solid #2a2a2a;border-radius:4px;"></div>
<div class="t" style="left:393px;top:712px;width:110px;text-align:center;color:#9a9a9a;font-weight:bold;font-size:11.6px;line-height:12px">SceneReader</div>
<svg class="a" style="left:442px;top:733px" width="12" height="12"><circle cx="6" cy="5.5" r="4.5" fill="#3c5a88" stroke="#232323" stroke-width="1.1"/></svg>
<div class="a" style="left:515px;top:689px;width:126px;height:58px;background:#e0e0e0;border-radius:6px;"></div>
<svg class="a" style="left:627px;top:675px" width="28" height="28"><circle cx="14" cy="14" r="13.2" fill="#e0e0e0"/><circle cx="14" cy="14" r="6.8" fill="none" stroke="#252525" stroke-width="3.9"/></svg>
<div class="a" style="left:523px;top:697px;width:110px;height:41px;background:#789ec4;border:1.7px solid #2a2a2a;border-radius:4px;"></div>
<div class="t" style="left:523px;top:712px;width:110px;text-align:center;color:#eeeeee;font-weight:bold;font-size:11.6px;line-height:12px">Camera</div>
<svg class="a" style="left:572px;top:733px" width="12" height="12"><circle cx="6" cy="5.5" r="4.5" fill="#3c5a88" stroke="#232323" stroke-width="1.1"/></svg>
<svg class="a" style="left:902px;top:560px" width="12" height="12" viewBox="0 0 12 12"><path d="M6 0.8L7.4 4.3L11 4.5L8.2 6.8L9.2 10.4L6 8.4L2.8 10.4L3.8 6.8L1 4.5L4.6 4.3Z" fill="#999"/></svg>
<div class="a" style="left:921px;top:553px;width:1px;height:23px;background:#3a3a3a"></div>
<svg class="a" style="left:926px;top:557px" width="16" height="16"><circle cx="6.8" cy="6.6" r="5.3" fill="none" stroke="#a0a0a0" stroke-width="1.1"/><path d="M10.6 10.4L14.3 14.2" stroke="#a0a0a0" stroke-width="1.8" stroke-linecap="round"/><path d="M4.5 5a2.5 2.5 0 0 1 2 -1.5" stroke="#a0a0a0" stroke-width="0.7" fill="none"/></svg>
<div class="a" style="left:945px;top:556px;width:249px;height:17px;background:#5f5f5f;border-radius:3px;box-shadow:0 1px 0 #333"></div>
<div class="t" style="left:948px;top:560px;color:#9a9a9a;">Filter...</div>
<svg class="a" style="left:1199px;top:557px" width="16" height="16"><circle cx="8" cy="8" r="7.3" fill="#a0a0a0"/><circle cx="8" cy="5" r="1.8" fill="#444"/><circle cx="5.2" cy="9.8" r="1.8" fill="#444"/><circle cx="10.8" cy="9.8" r="1.8" fill="#444"/></svg>
<div class="a" style="left:1220px;top:555px;width:47px;height:20px;background:linear-gradient(#3567a1,#2e5a8e);border-radius:3px;"></div>
<svg class="a" style="left:1225px;top:559px" width="12" height="12" viewBox="0 0 12 12"><path d="M0.5 0.5H10.5V3H6.8L9.5 6.5H6.3V11.5H4.7V6.5H1.5L4.2 3H0.5Z" fill="#f2f2f2" stroke="#161616" stroke-width="0.8" stroke-linejoin="round"/></svg>
<svg class="a" style="left:1253px;top:561px" width="8" height="7" viewBox="0 0 8 7"><path d="M0 0H8L4.0 7Z" fill="#eaeaea"/></svg>
<div class="a" style="left:901px;top:581px;width:368px;height:355px;background:#454545"></div>
<div class="a" style="left:901px;top:581px;width:368px;height:22px;background:#575757"></div>
<div class="a" style="left:901px;top:603px;width:368px;height:1px;background:#333"></div>
<div class="a" style="left:901px;top:604px;width:368px;height:20px;background:#4a4a4a"></div>
<div class="a" style="left:901px;top:624px;width:368px;height:20px;background:#434343"></div>
<div class="a" style="left:901px;top:644px;width:368px;height:20px;background:#4a4a4a"></div>
<div class="a" style="left:901px;top:664px;width:368px;height:20px;background:#434343"></div>
<div class="a" style="left:901px;top:684px;width:368px;height:20px;background:#4a4a4a"></div>
<div class="a" style="left:901px;top:704px;width:368px;height:20px;background:#434343"></div>
<div class="a" style="left:901px;top:724px;width:368px;height:20px;background:#4a4a4a"></div>
<div class="a" style="left:901px;top:744px;width:368px;height:20px;background:#434343"></div>
<div class="a" style="left:901px;top:764px;width:368px;height:20px;background:#4a4a4a"></div>
<div class="a" style="left:901px;top:784px;width:368px;height:20px;background:#434343"></div>
<div class="a" style="left:901px;top:804px;width:368px;height:20px;background:#4a4a4a"></div>
<div class="a" style="left:901px;top:824px;width:368px;height:20px;background:#434343"></div>
<div class="a" style="left:901px;top:844px;width:368px;height:20px;background:#4a4a4a"></div>
<div class="a" style="left:901px;top:864px;width:368px;height:20px;background:#434343"></div>
<div class="a" style="left:901px;top:884px;width:368px;height:20px;background:#4a4a4a"></div>
<div class="a" style="left:901px;top:904px;width:368px;height:20px;background:#434343"></div>
<div class="a" style="left:901px;top:924px;width:368px;height:12px;background:#4a4a4a"></div>
<div class="a" style="left:1183px;top:581px;width:1px;height:22px;background:#3c3c3c"></div>
<div class="a" style="left:1183px;top:604px;width:1px;height:332px;background:#424242"></div>
<div class="a" style="left:1211px;top:581px;width:1px;height:22px;background:#3c3c3c"></div>
<div class="a" style="left:1211px;top:604px;width:1px;height:332px;background:#424242"></div>
<div class="a" style="left:1239px;top:581px;width:1px;height:22px;background:#3c3c3c"></div>
<div class="a" style="left:1239px;top:604px;width:1px;height:332px;background:#424242"></div>
<div class="a" style="left:901px;top:581px;width:1px;height:355px;background:#575757"></div>
<div class="t" style="left:906px;top:588px;color:#e6e6e6;font-weight:bold;-webkit-text-stroke:0.3px;">Name</div>
<div class="t" style="left:925px;top:609px;color:#e0e0e0;">camera</div>
<svg class="a" style="left:1189px;top:585px" width="15" height="15" viewBox="0 0 20 20"><path d="M0.2 3.6L9.6 0.5L19 3.6L18 14.3L9.6 19L1.2 14.8Z" fill="#8c8c8c" stroke="#3a3a3a" stroke-width="1"/><path d="M1.2 14.8L9.6 11.5L18 14.3L9.6 19Z" fill="#9a9a9a" stroke="#3a3a3a" stroke-width="0.9"/><path d="M9.6 0.5V5" stroke="#3a3a3a" stroke-width="1"/><path d="M9.6 5L14.75 7.1V13.2L9.6 15.75L4.2 13.4V7.1Z" fill="#b0b0b0" stroke="#3a3a3a" stroke-width="1"/><path d="M4.2 7.1L9.6 8.7L14.75 7.1M9.6 8.7V15.75" stroke="#555" stroke-width="0.9" fill="none"/></svg>
<svg class="a" style="left:1217px;top:585px" width="15" height="15" viewBox="0 0 15 15"><path d="M7.5 0.5L14.3 3.2V11.5L7.5 14.6L0.7 11.5V3.2Z" fill="#8a4c4c" stroke="#3e3030" stroke-width="0.8"/><path d="M7.5 0.9L13.9 3.3L7.5 6L1.1 3.3Z" fill="#965656"/><path d="M0.7 3.2L7.5 6L14.3 3.2M7.5 6V14.6" stroke="#4a3030" stroke-width="0.8" fill="none"/></svg>
<svg class="a" style="left:1245px;top:589px" width="15" height="9" viewBox="0 0 15 9"><path d="M0.5 4.2Q7.5 -3 14.5 4.2Q7.5 11.4 0.5 4.2Z" fill="#f0f0f0"/><circle cx="7.5" cy="4.2" r="2.9" fill="#2a2a2a"/><circle cx="6.6" cy="3.3" r="0.9" fill="#f0f0f0"/></svg>
<svg class="a" style="left:1244px;top:610px" width="15" height="9" viewBox="0 0 15 9"><path d="M0.5 4.2Q7.5 -3 14.5 4.2Q7.5 11.4 0.5 4.2Z" fill="#9a9a9a"/><circle cx="7.5" cy="4.2" r="2.9" fill="#2a2a2a"/><circle cx="6.6" cy="3.3" r="0.9" fill="#9a9a9a"/></svg>
<svg class="a" style="left:11px;top:953px" width="5" height="5"><circle cx="2.5" cy="2.5" r="2" fill="#3a3a3a"/></svg>
<svg class="a" style="left:11px;top:959px" width="5" height="5"><circle cx="2.5" cy="2.5" r="2" fill="#3a3a3a"/></svg>
<svg class="a" style="left:11px;top:965px" width="5" height="5"><circle cx="2.5" cy="2.5" r="2" fill="#3a3a3a"/></svg>
<div class="a" style="left:19px;top:952px;width:31px;height:17px;background:#5f5f5f;border-radius:3px;box-shadow:0 1px 0 #333;"></div>
<div class="t" style="left:21px;top:956px;color:#e0e0e0;">1</div>
<div class="a" style="left:54px;top:952px;width:31px;height:17px;background:#5f5f5f;border-radius:3px;box-shadow:0 1px 0 #333;"></div>
<div class="t" style="left:56px;top:956px;color:#e0e0e0;">1</div>
<svg class="a" style="left:0;top:0" width="1280" height="987"><path d="M97 964V970M108 964V970M118 964V970M128 964V970M139 959V970M149 964V970M160 964V970M170 964V970M180 964V970M191 955V970M201 964V970M211 964V970M222 964V970M232 964V970M243 959V970M253 964V970M263 964V970M274 964V970M284 964V970M295 955V970M305 964V970M315 964V970M326 964V970M336 964V970M347 959V970M357 964V970M367 964V970M378 964V970M388 964V970M399 955V970M409 964V970M419 964V970M430 964V970M440 964V970M450 959V970M461 964V970M471 964V970M482 964V970M492 964V970M502 955V970M513 964V970M523 964V970M534 964V970M544 964V970M554 959V970M565 964V970M575 964V970M586 964V970M596 964V970M606 955V970M617 964V970M627 964V970M637 964V970M648 964V970M658 959V970M669 964V970M679 964V970M689 964V970M700 964V970M710 955V970M721 964V970M731 964V970M741 964V970M752 964V970M762 959V970M773 964V970M783 964V970M793 964V970M804 964V970M814 955V970M825 964V970M835 964V970M845 964V970M856 964V970M866 959V970M876 964V970M887 964V970M897 964V970M908 964V970M918 955V970M928 964V970M939 964V970M949 964V970M960 964V970M970 959V970M980 964V970M991 964V970M1001 964V970M1012 964V970M1022 955V970M1032 964V970M1043 964V970M1053 964V970M1063 964V970M1074 959V970M1084 964V970M1095 964V970M1105 964V970M1115 964V970" stroke="#2a2a2a" stroke-width="2"/></svg>
<div class="a" style="left:88px;top:952px;width:2px;height:18px;background:#e8d21c"></div>
<div class="t" style="left:94px;top:957px;color:#dcc62a;">1</div>
<svg class="a" style="left:1118px;top:953px" width="37" height="15" viewBox="0 0 37 15"><path d="M2.3 0.8V14.2" stroke="#a6a6a6" stroke-width="2"/><path d="M8.5 1.5V13.5L3.3 7.5Z" fill="#a6a6a6"/><path d="M13 2L22.5 7.5L13 13L15.2 7.5Z" fill="#a6a6a6"/><path d="M34.2 0.8V14.2" stroke="#a6a6a6" stroke-width="2"/><path d="M28 1.5V13.5L33.2 7.5Z" fill="#a6a6a6"/></svg>
<div class="a" style="left:1158px;top:953px;width:40px;height:16px;background:#5f5f5f;border-radius:3px;box-shadow:0 1px 0 #333;"></div>
<div class="t" style="left:1160px;top:956px;color:#e0e0e0;">1</div>
<div class="a" style="left:1202px;top:953px;width:31px;height:16px;background:#5f5f5f;border-radius:3px;box-shadow:0 1px 0 #333;"></div>
<div class="t" style="left:1204px;top:956px;color:#e0e0e0;">100</div>
<div class="a" style="left:1237px;top:953px;width:31px;height:16px;background:#5f5f5f;border-radius:3px;box-shadow:0 1px 0 #333;"></div>
<div class="t" style="left:1239px;top:956px;color:#e0e0e0;">100</div>
</body></html>
